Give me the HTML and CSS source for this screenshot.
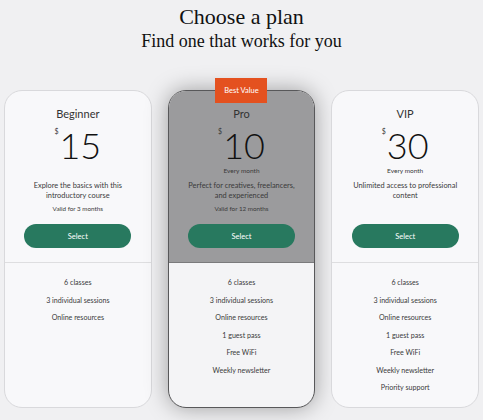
FILE: index.html
```html
<!DOCTYPE html>
<html>
<head>
<meta charset="utf-8">
<link rel="stylesheet" href="styles.css">
</head>
<body>
<header class="head">
  <h1 class="title">Choose a plan</h1>
  <h2 class="subtitle">Find one that works for you</h2>
</header>
<main class="plans">
  <section class="card">
    <div class="top">
      <div class="name">Beginner</div>
      <div class="price"><span class="cur">$</span><span class="amt">15</span></div>
      <div class="period hidden">Every month</div>
      <p class="desc">Explore the basics with this introductory course</p>
      <div class="valid">Valid for 3 months</div>
      <button class="btn">Select</button>
    </div>
    <ul class="features">
      <li>6 classes</li>
      <li>3 individual sessions</li>
      <li>Online resources</li>
    </ul>
  </section>
  <section class="card featured">
    <div class="badge">Best Value</div>
    <div class="top">
      <div class="name">Pro</div>
      <div class="price"><span class="cur">$</span><span class="amt">10</span></div>
      <div class="period">Every month</div>
      <p class="desc">Perfect for creatives, freelancers, and experienced</p>
      <div class="valid">Valid for 12 months</div>
      <button class="btn">Select</button>
    </div>
    <ul class="features">
      <li>6 classes</li>
      <li>3 individual sessions</li>
      <li>Online resources</li>
      <li>1 guest pass</li>
      <li>Free WiFi</li>
      <li>Weekly newsletter</li>
    </ul>
  </section>
  <section class="card">
    <div class="top">
      <div class="name">VIP</div>
      <div class="price"><span class="cur">$</span><span class="amt">30</span></div>
      <div class="period">Every month</div>
      <p class="desc">Unlimited access to professional content</p>
      <button class="btn">Select</button>
    </div>
    <ul class="features">
      <li>6 classes</li>
      <li>3 individual sessions</li>
      <li>Online resources</li>
      <li>1 guest pass</li>
      <li>Free WiFi</li>
      <li>Weekly newsletter</li>
      <li>Priority support</li>
    </ul>
  </section>
</main>
</body>
</html>
```
FILE: styles.css
```css
* { box-sizing: border-box; }
html, body { margin: 0; padding: 0; }
body {
  background: #f0f0f2;
  font-family: Lato, "Noto Sans", sans-serif;
  color: #3a3a3a;
  width: 483px;
  height: 420px;
  overflow: hidden;
}
.head {
  text-align: center;
  padding-top: 4px;
}
.title {
  margin: 0;
  font-family: "Liberation Serif", serif;
  font-weight: normal;
  font-size: 22px;
  line-height: 26px;
  color: #111;
}
.subtitle {
  margin: 0;
  font-family: "Liberation Serif", serif;
  font-weight: normal;
  font-size: 18px;
  line-height: 23px;
  color: #111;
}
.plans {
  display: grid;
  grid-template-columns: repeat(3, 1fr);
  gap: 16px;
  padding: 0 4px;
  margin-top: 37px;
  align-items: stretch;
}
.card {
  position: relative;
  background: #f8f8fa;
  border: 1px solid #d9d9dc;
  border-radius: 18px;
  height: 318px;
  display: flex;
  flex-direction: column;
}
.featured {
  background: #f4f4f6;
  border-color: #58585a;
  box-shadow: 0 0 22px rgba(0,0,0,0.35);
}
.top {
  height: 172px;
  border-bottom: 1px solid #dedee0;
  border-radius: 17px 17px 0 0;
  display: flex;
  flex-direction: column;
  align-items: center;
  text-align: center;
  padding-top: 15px;
}
.featured .top {
  background: #9b9b9d;
  border-bottom-color: #7a7a7c;
}
.badge {
  position: absolute;
  top: -13px;
  left: 50%;
  transform: translateX(-50%);
  width: 52px;
  height: 25px;
  background: #e4511f;
  color: #fff;
  font-size: 7.5px;
  line-height: 25px;
  text-align: center;
  z-index: 2;
}
.name {
  font-size: 11px;
  line-height: 16px;
  color: #333;
}
.price {
  display: flex;
  align-items: flex-start;
  margin-top: 4px;
  height: 40px;
}
.cur {
  font-size: 7px;
  line-height: 8px;
  margin-right: 1px;
  margin-top: 1px;
}
.amt {
  font-size: 36px;
  font-weight: 300;
  line-height: 36px;
  margin-top: 1px;
  color: #111;
}
.period {
  font-size: 6.5px;
  line-height: 10px;
}
.hidden { visibility: hidden; }
.desc {
  margin: 5px 0 0;
  max-width: 110px;
  font-size: 7.4px;
  line-height: 10px;
}
.valid {
  font-size: 6.3px;
  line-height: 10px;
  margin-top: 3px;
}
.btn {
  margin-top: auto;
  margin-bottom: 14px;
  width: 107px;
  height: 24px;
  border: none;
  border-radius: 12px;
  background: #28795f;
  color: #fff;
  font-family: inherit;
  font-size: 7.5px;
}
.features {
  list-style: none;
  margin: 0;
  padding: 11px 0 0;
  text-align: center;
  font-size: 7.1px;
  line-height: 17.5px;
  color: #3a3a3a;
}
```
